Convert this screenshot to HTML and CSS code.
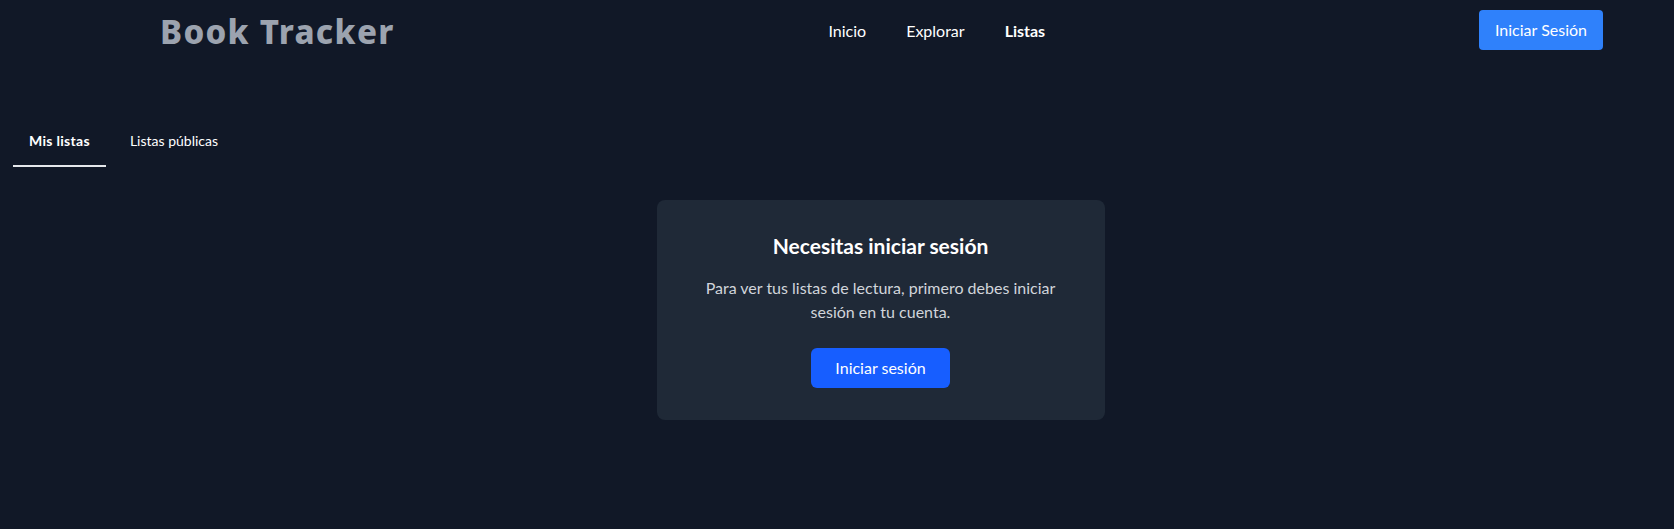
FILE: index.html
```html
<!DOCTYPE html>
<html lang="es">
<head>
<meta charset="utf-8">
<title>Book Tracker</title>
<link rel="stylesheet" href="styles.css">
</head>
<body>
<header class="topbar">
  <a class="logo" href="#">Book Tracker</a>
  <nav class="mainnav">
    <a href="#" class="navlink">Inicio</a>
    <a href="#" class="navlink">Explorar</a>
    <a href="#" class="navlink active">Listas</a>
  </nav>
  <button class="btn btn-header">Iniciar Sesión</button>
</header>
<main class="content">
  <div class="tabs">
    <button class="tab active">Mis listas</button>
    <button class="tab">Listas públicas</button>
  </div>
  <div class="card-wrap">
    <section class="card">
      <h2 class="card-title">Necesitas iniciar sesión</h2>
      <p class="card-text">Para ver tus listas de lectura, primero debes iniciar sesión en tu cuenta.</p>
      <button class="btn btn-primary">Iniciar sesión</button>
    </section>
  </div>
</main>
</body>
</html>
```

FILE: styles.css
```css
* { box-sizing: border-box; }
html, body {
  margin: 0;
  padding: 0;
  background: #111827;
  height: 100%;
}
body {
  font-family: "Lato", "Noto Sans", sans-serif;
  color: #ffffff;
}
a { text-decoration: none; color: inherit; }
button { font-family: inherit; border: 0; cursor: pointer; }

.topbar {
  height: 60px;
  display: flex;
  align-items: center;
  justify-content: space-between;
  padding: 0 71px 0 160px;
}
.logo {
  font-family: "Noto Sans", sans-serif;
  font-size: 33px;
  font-weight: 800;
  letter-spacing: 1.3px;
  color: #9ca3af;
  line-height: 40px;
  margin-top: 3px;
}
.mainnav {
  display: flex;
  gap: 40px;
  align-items: center;
}
.navlink {
  font-size: 16px;
  color: #ffffff;
  line-height: 24px;
  margin-top: 2px;
}
.navlink.active { font-weight: 700; }

.btn {
  font-size: 16px;
  line-height: 24px;
  color: #ffffff;
  padding: 8px 16px;
  border-radius: 4px;
}
.btn-header { background: #2f81fb; }
.btn-primary {
  background: #175eff;
  padding: 8px 24px;
  border-radius: 6px;
}

.content {
  padding: 55px 13px 0;
}
.tabs {
  display: flex;
  gap: 8px;
}
.tab {
  background: transparent;
  color: #ffffff;
  font-size: 14px;
  line-height: 20px;
  padding: 16px 16px 14px;
  border-bottom: 2px solid transparent;
}
.tab.active {
  font-weight: 700;
  letter-spacing: 0.3px;
  border-bottom-color: #e5e7eb;
}

.card-wrap {
  display: flex;
  justify-content: center;
  padding: 33px 0 0 87px;
}
.card {
  width: 448px;
  background: #1f2937;
  border-radius: 8px;
  padding: 32px;
  text-align: center;
}
.card-title {
  margin: 0 0 16px;
  font-size: 21px;
  line-height: 28px;
  font-weight: 700;
  color: #ffffff;
}
.card-text {
  margin: 0 0 24px;
  font-size: 16px;
  line-height: 24px;
  color: #d1d5db;
}
```
